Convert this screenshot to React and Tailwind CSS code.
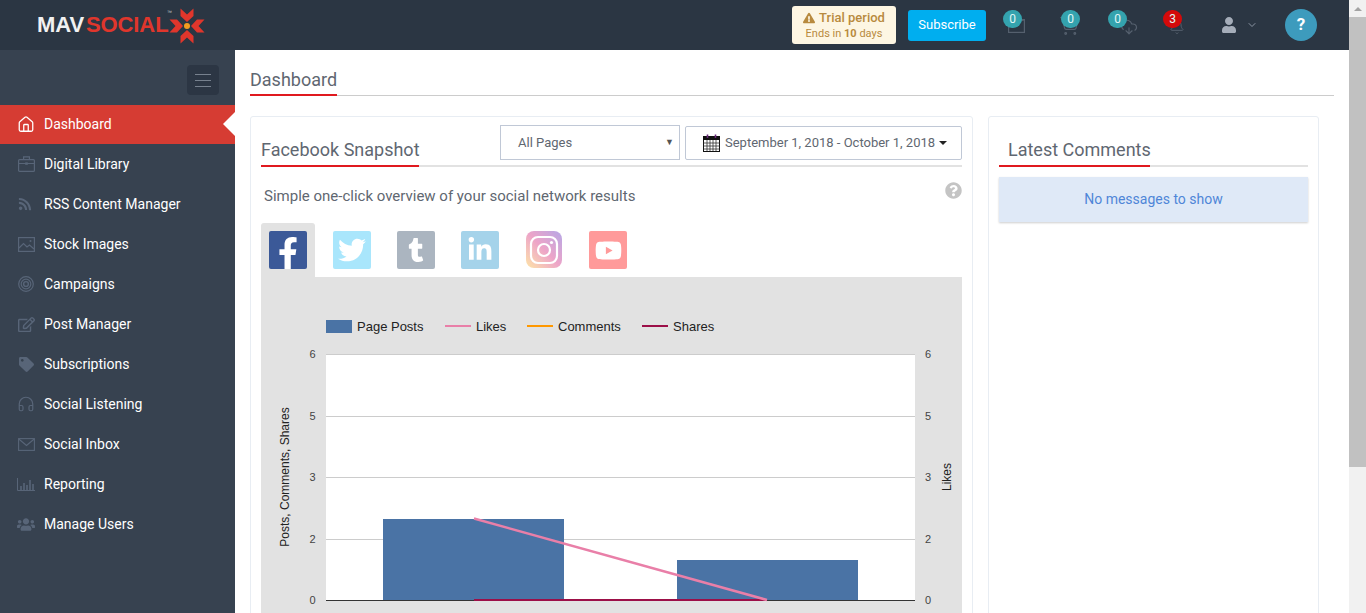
import { Home, ChevronDown, Headphones, ShoppingCart, CloudDownload, Bell } from "lucide-react";
import { FaFacebookF, FaTwitter, FaTumblr, FaLinkedinIn, FaYoutube, FaUser, FaUsers, FaTag, FaRegEdit, FaQuestionCircle, FaExclamationTriangle, FaRss } from "react-icons/fa";

const BriefcaseIcon = () => (
    <svg width="17" height="16" viewBox="0 0 17 16" fill="none" stroke="currentColor" strokeWidth="1.2">
        <rect x="0.6" y="3.6" width="15.8" height="11.8" rx="1" />
        <path d="M5.6 3.5V0.8H11.4V3.5M0.6 7.5H16.4" />
        <rect x="7.2" y="6.4" width="2.6" height="2.4" fill="currentColor" stroke="none" />
    </svg>
);

const ImageIcon = () => (
    <svg width="17" height="15" viewBox="0 0 17 15" fill="none" stroke="currentColor" strokeWidth="1.2">
        <rect x="0.6" y="0.6" width="15.8" height="13.8" />
        <path d="M1 11L5.5 6.5L9 10L11.5 8L16 12" />
        <circle cx="12.5" cy="4" r="1" fill="currentColor" stroke="none" />
    </svg>
);

const TargetIcon = () => (
    <svg width="16" height="16" viewBox="0 0 16 16" fill="none" stroke="currentColor">
        <circle cx="8" cy="8" r="7.3" strokeWidth="1.2" />
        <circle cx="8" cy="8" r="4.8" strokeWidth="1.2" />
        <circle cx="8" cy="8" r="2.4" strokeWidth="1.4" />
    </svg>
);

const EnvelopeIcon = () => (
    <svg width="17" height="13" viewBox="0 0 17 13" fill="none" stroke="currentColor" strokeWidth="1.1">
        <rect x="0.6" y="0.6" width="15.8" height="11.8" />
        <path d="M0.8 1L8.5 7.5L16.2 1" />
    </svg>
);

const ChartIcon = () => (
    <svg width="18" height="13" viewBox="0 0 18 13" fill="none" stroke="currentColor">
        <path d="M0.5 0V12.5H18" strokeWidth="1" />
        <path d="M4 12V8M7 12V5M10 12V7M13 12V2M16 12V6" strokeWidth="1.6" />
    </svg>
);

const BoxIcon = ({ className }) => (
    <svg width="17" height="14" viewBox="0 0 17 14" fill="none" stroke="currentColor" strokeWidth="1.2" className={className}>
        <rect x="0.6" y="0.6" width="15.8" height="12.8" />
        <path d="M0.8 8L8 3L16 0.8" />
    </svg>
);

const CalendarIcon = () => (
    <svg width="17" height="18" viewBox="0 0 17 18" fill="none" className="mr-[5px]">
        <rect x="0.5" y="2.5" width="16" height="15" fill="#fff" stroke="#111" />
        <rect x="0.5" y="2.5" width="16" height="3.5" fill="#111" />
        <path d="M0.5 9H16.5M0.5 12H16.5M0.5 15H16.5M4 6V17M7 6V17M10 6V17M13 6V17" stroke="#333" strokeWidth="0.8" />
        <path d="M4.5 0.5V4M12.5 0.5V4" stroke="#6b2a7a" strokeWidth="1.6" />
    </svg>
);

const InstagramIcon = () => (
    <svg width="30" height="30" viewBox="0 0 30 30" fill="none" stroke="#fff">
        <rect x="2" y="2" width="26" height="26" rx="7" strokeWidth="2.2" />
        <circle cx="15" cy="15" r="6" strokeWidth="2.2" />
        <circle cx="22.5" cy="7.5" r="1.6" fill="#fff" stroke="none" />
    </svg>
);

const LogoMark = () => (
    <svg width="36" height="36" viewBox="-18 -18 36 36" className="absolute left-[169px] top-[8px]">
        {[0, 90, 180, 270].map((a) => (
            <path key={a} d="M-6.5 -17.5L0 -11.5L6.5 -17.5V-10L0 -4L-6.5 -10Z" fill="#e0362c" transform={`rotate(${a})`} />
        ))}
        <circle r="3" fill="#f39c1f" />
    </svg>
);

const menu = [
    { label: "Dashboard", icon: <Home size={19} strokeWidth={1.7} />, active: true },
    { label: "Digital Library", icon: <BriefcaseIcon /> },
    { label: "RSS Content Manager", icon: <FaRss size={14} className="mr-[3px]" /> },
    { label: "Stock Images", icon: <ImageIcon /> },
    { label: "Campaigns", icon: <TargetIcon /> },
    { label: "Post Manager", icon: <FaRegEdit size={17} /> },
    { label: "Subscriptions", icon: <FaTag size={15} /> },
    { label: "Social Listening", icon: <Headphones size={18} strokeWidth={1.6} /> },
    { label: "Social Inbox", icon: <EnvelopeIcon /> },
    { label: "Reporting", icon: <ChartIcon /> },
    { label: "Manage Users", icon: <FaUsers size={19} /> },
];

const notifications = [
    { icon: <BoxIcon className="absolute left-[5px] top-[14px] text-[#55606e]" />, count: 0, width: "w-[58px]" },
    { icon: <ShoppingCart size={20} strokeWidth={1.5} className="absolute -left-[2px] top-[11px] text-[#55606e]" />, count: 0, width: "w-[47px]" },
    { icon: <CloudDownload size={18} strokeWidth={1.5} className="absolute left-[12px] top-[13px] text-[#55606e]" />, count: 0, width: "w-[55px]" },
    { icon: <Bell size={16} strokeWidth={1.5} className="absolute left-[6px] top-[14px] text-[#55606e]" />, count: 3, width: "w-[57px]", red: true },
];

const socials = [
    { icon: <FaTwitter size={28} />, bg: "bg-[#a9e6fc]", box: "ml-[18px] w-[38px] h-[38px] rounded-[2px]" },
    { icon: <FaTumblr size={24} />, bg: "bg-[#abb5c0]", box: "ml-[26px] w-[38px] h-[38px] rounded-[2px]" },
    { icon: <FaLinkedinIn size={26} />, bg: "bg-[#a5d3ea]", box: "ml-[26px] w-[38px] h-[38px] rounded-[2px]" },
    { icon: <InstagramIcon />, bg: "bg-gradient-to-tr from-[#fde4a5] via-[#eda4c8] to-[#b5a6e6]", box: "ml-[27px] w-[36px] h-[37px] rounded-[8px]" },
    { icon: <FaYoutube size={27} />, bg: "bg-[#ff9a9a]", box: "ml-[27px] w-[38px] h-[38px] rounded-[2px]" },
];

function Logo() {
    return (
        <div className="relative flex items-center pl-[37px] w-[235px] -mt-[2px] font-['Liberation_Sans',sans-serif] text-[22px] font-bold tracking-[-0.1px]">
            <span className="text-[#f1f1f1] mr-[2px]">MAV</span>
            <span className="text-[#e0362c]">SOCIAL</span>
            <span className="absolute left-[167px] top-[2px] text-[5px] leading-none font-normal tracking-normal text-[#c8ccd2]">™</span>
        </div>
    );
}

function Header() {
    return (
        <header className="relative h-[50px] shrink-0 bg-[#2b3643] flex items-center">
            <Logo />
            <LogoMark />
            <div className="ml-auto flex items-center pr-[32px]">
                <div className="w-[104px] h-[38px] bg-[#fdf6e3] rounded-[3px] flex flex-col items-center justify-center text-[#b88a3e] leading-none">
                    <div className="flex items-center gap-[4px] text-[13px] font-medium">
                        <FaExclamationTriangle className="text-[12px]" />
                        Trial period
                    </div>
                    <div className="text-[11px] mt-[4px]">Ends in <b>10</b> days</div>
                </div>
                <button className="ml-[12px] w-[78px] h-[31px] bg-[#00aeef] rounded-[3px] text-white text-[13px]">Subscribe</button>
                <div className="flex ml-[17px]">
                    {notifications.map((n, i) => (
                        <div key={i} className={`relative h-[40px] ${n.width}`}>
                            {n.icon}
                            <span className={`absolute left-0 top-[5px] w-[19px] h-[18px] rounded-full flex items-center justify-center text-[12px] text-[#e0f7f7] ${n.red ? "bg-[#d40a0a]" : "bg-[#34a3ae]"}`}>{n.count}</span>
                        </div>
                    ))}
                </div>
                <FaUser size={16} className="ml-[1px] text-[#a5adb9]" />
                <ChevronDown className="ml-[9px] text-[#8b95a3]" size={12} />
                <div className="ml-[27px] w-[32px] h-[32px] rounded-full bg-[#3d9bbd] flex items-center justify-center text-white text-[17px] font-bold">?</div>
            </div>
        </header>
    );
}

function Sidebar() {
    return (
        <aside className="w-[235px] shrink-0 bg-[#374250] pt-[15px]">
            <div className="flex justify-end pr-[16px] mb-[10px]">
                <div className="w-[32px] h-[30px] rounded-[4px] bg-[#2c3644] flex flex-col items-center justify-center gap-[5px]">
                    <i className="block w-[16px] h-px bg-[#77818e]" />
                    <i className="block w-[16px] h-px bg-[#77818e]" />
                    <i className="block w-[16px] h-px bg-[#77818e]" />
                </div>
            </div>
            <nav>
                {menu.map((m) => (
                    <div key={m.label} className={`relative flex items-center pl-[17px] text-[14px] text-white ${m.active ? "h-[39px] bg-[#d63c33]" : "h-[40px]"}`}>
                        <span className={`w-[18px] flex justify-center ${m.active ? "text-white" : "text-[#586578]"}`}>
                            {m.icon}
                        </span>
                        <span className="ml-[9px]">{m.label}</span>
                        {m.active && <span className="absolute right-0 top-[7px] border-y-[12px] border-y-transparent border-r-[12px] border-r-white" />}
                    </div>
                ))}
            </nav>
        </aside>
    );
}

function Chart() {
    const grid = [{ y: 77, l: 6 }, { y: 139, l: 5 }, { y: 200, l: 3 }, { y: 262, l: 2 }];
    const x0 = 65;
    const x1 = 654;
    return (
        <svg width="701" height="336" className="block font-['Liberation_Sans',sans-serif]">
            <rect x="65" y="43" width="26" height="13" fill="#4a73a5" />
            <text x="96" y="54" fontSize="13" fill="#222">Page Posts</text>
            <line x1="184" x2="210" y1="49" y2="49" stroke="#e97fa8" strokeWidth="2" />
            <text x="215" y="54" fontSize="13" fill="#222">Likes</text>
            <line x1="266" x2="292" y1="49" y2="49" stroke="#ff9800" strokeWidth="2" />
            <text x="297" y="54" fontSize="13" fill="#222">Comments</text>
            <line x1="381" x2="407" y1="49" y2="49" stroke="#9c0f48" strokeWidth="2" />
            <text x="412" y="54" fontSize="13" fill="#222">Shares</text>

            <rect x={x0} y="77" width={x1 - x0} height="246" fill="#fff" />
            {grid.map((g) => (
                <g key={g.y}>
                    <line x1={x0} x2={x1} y1={g.y + 0.5} y2={g.y + 0.5} stroke="#ccc" />
                    <text x="51.5" y={g.y + 4} fontSize="11" fill="#444" textAnchor="middle">{g.l}</text>
                    <text x="667" y={g.y + 4} fontSize="11" fill="#444" textAnchor="middle">{g.l}</text>
                </g>
            ))}
            <text x="51.5" y="327" fontSize="11" fill="#444" textAnchor="middle">0</text>
            <text x="667" y="327" fontSize="11" fill="#444" textAnchor="middle">0</text>

            <rect x="122" y="242" width="181" height="81" fill="#4a73a5" />
            <rect x="416" y="283" width="181" height="40" fill="#4a73a5" />
            <line x1={x0} x2={x1} y1="323.5" y2="323.5" stroke="#333" />
            <line x1="213" x2="506" y1="323" y2="323" stroke="#9c0f48" strokeWidth="2" />
            <line x1="213" y1="241.5" x2="506" y2="323" stroke="#e97fa8" strokeWidth="2.5" />

            <text transform="translate(28 200) rotate(-90)" fontSize="12" fill="#222" textAnchor="middle">Posts, Comments, Shares</text>
            <text transform="translate(690 200) rotate(-90)" fontSize="12" fill="#222" textAnchor="middle">Likes</text>
        </svg>
    );
}

function Main() {
    return (
        <main className="flex-1 min-w-0 bg-white pl-[15px] pr-[15px] overflow-hidden">
            <div className="h-[46px] border-b border-[#ccc] flex items-end">
                <h1 className="text-[18px] leading-none text-[#5f6771] pb-[5px] border-b-2 border-[#e0191f] -mb-px w-[87px] whitespace-nowrap">Dashboard</h1>
            </div>
            <div className="flex mt-[20px] gap-[15px] items-stretch">
                <section className="w-[723px] h-[600px] shrink-0 rounded-[3px] border border-[#e8edf3] px-[10px] pt-[8px]">
                    <div className="flex items-end justify-between border-b-2 border-[#e2e2e2]">
                        <h2 className="text-[18px] leading-none text-[#5f6771] pb-[6px] border-b-2 border-[#e0191f] -mb-[2px] w-[158px] whitespace-nowrap">Facebook Snapshot</h2>
                        <div className="flex gap-[5px] mb-[5px]">
                            <div className="w-[180px] h-[35px] border border-[#c0c8d6] flex items-center justify-between pl-[17px] pr-[5px] text-[13px] text-[#5f6771]">
                                All Pages
                                <span className="text-[9px] text-[#555]">▼</span>
                            </div>
                            <div className="w-[277px] h-[34px] mt-px border border-[#c0c8d6] rounded-[2px] flex items-center pl-[17px] text-[13px] text-[#5f6771]">
                                <CalendarIcon />
                                September 1, 2018 - October 1, 2018
                                <span className="ml-[4px] border-x-[4px] border-x-transparent border-t-[4px] border-t-[#222]" />
                            </div>
                        </div>
                    </div>
                    <div className="flex justify-between items-center pl-[3px] mt-[19px] h-[20px]">
                        <p className="text-[15px] text-[#5f6771]">Simple one-click overview of your social network results</p>
                        <FaQuestionCircle className="text-[#c4c4c4] text-[17px] -mt-[12px]" />
                    </div>
                    <div className="flex mt-[17px] h-[54px]">
                        <div className="w-[54px] h-[54px] bg-[#e2e2e2] rounded-t-[3px] pt-[8px] pl-[8px]">
                            <div className="w-[38px] h-[38px] bg-[#3b5998] rounded-[2px] flex items-end justify-center text-white text-[32px]">
                                <FaFacebookF />
                            </div>
                        </div>
                        {socials.map((s, i) => (
                            <div key={i} className={`${s.box} mt-[8px] ${s.bg} flex items-center justify-center text-white`}>
                                {s.icon}
                            </div>
                        ))}
                    </div>
                    <div className="bg-[#e2e2e2]">
                        <Chart />
                    </div>
                </section>
                <section className="w-[331px] h-[600px] shrink-0 rounded-[3px] border border-[#e8edf3] px-[10px] pt-[24px]">
                    <div className="border-b-2 border-[#e2e2e2]">
                        <h2 className="text-[18px] leading-none text-[#5f6771] pl-[9px] pb-[6px] border-b-2 border-[#e0191f] -mb-[2px] w-[151px] whitespace-nowrap">Latest Comments</h2>
                    </div>
                    <div className="mt-[10px] h-[45px] bg-[#dfe9f7] shadow-[0_1px_2px_rgba(0,0,0,0.2)] flex items-center justify-center text-[14px] text-[#4f86d8]">No messages to show</div>
                </section>
            </div>
        </main>
    );
}

function Scrollbar() {
    return (
        <div className="w-[17px] shrink-0 bg-[#f1f1f1] flex flex-col items-center">
            <div className="h-[17px] flex items-center">
                <span className="border-x-[4px] border-x-transparent border-b-[4px] border-b-[#a3a3a3]" />
            </div>
            <div className="w-full h-[450px] bg-[#c1c1c1]" />
        </div>
    );
}

export default function App() {
    return (
        <div className="h-screen flex overflow-hidden font-['Roboto',sans-serif]">
            <div className="flex-1 min-w-0 flex flex-col">
                <Header />
                <div className="flex-1 min-h-0 flex">
                    <Sidebar />
                    <Main />
                </div>
            </div>
            <Scrollbar />
        </div>
    );
}
